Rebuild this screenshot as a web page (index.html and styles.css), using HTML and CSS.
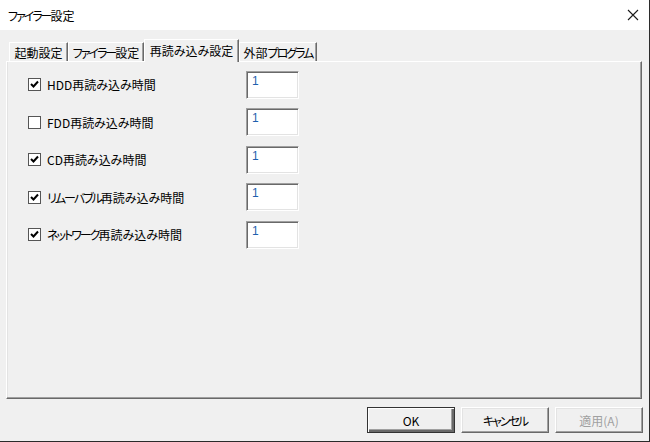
FILE: index.html
```html
<!DOCTYPE html>
<html lang="ja">
<head>
    <meta charset="UTF-8">
    <title>ファイラー設定</title>
    <link rel="stylesheet" href="styles.css">
</head>
<body>
    <div class="window">
        <div class="titlebar">
            <span class="title"><span class="kana">ファイラー</span>設定</span>
            <svg class="close" width="12" height="12" viewBox="0 0 12 12">
                <path d="M1 1 L11 11 M11 1 L1 11" stroke="#1a1a1a" stroke-width="1.1" fill="none"/>
            </svg>
        </div>

        <div class="body">
            <!-- tabs -->
            <div class="tabs">
                <div class="tab tab-1">起動設定</div>
                <div class="tab tab-2"><span class="kana">ファイラー</span>設定</div>
                <div class="tab tab-3 active">再読み込み設定</div>
                <div class="tab tab-4">外部<span class="kana">プログラム</span></div>
            </div>

            <div class="panel">
                <div class="row">
                    <label class="check">
                        <span class="box checked"><svg width="11" height="11" viewBox="0 0 11 11"><path d="M2 5 L4.5 7.5 L9 2.5" stroke="#000" stroke-width="2" fill="none"/></svg></span>
                        <span>HDD再読み込み時間</span>
                    </label>
                    <div class="field">1</div>
                </div>
                <div class="row">
                    <label class="check">
                        <span class="box"></span>
                        <span>FDD再読み込み時間</span>
                    </label>
                    <div class="field">1</div>
                </div>
                <div class="row">
                    <label class="check">
                        <span class="box checked"><svg width="11" height="11" viewBox="0 0 11 11"><path d="M2 5 L4.5 7.5 L9 2.5" stroke="#000" stroke-width="2" fill="none"/></svg></span>
                        <span>CD再読み込み時間</span>
                    </label>
                    <div class="field">1</div>
                </div>
                <div class="row">
                    <label class="check">
                        <span class="box checked"><svg width="11" height="11" viewBox="0 0 11 11"><path d="M2 5 L4.5 7.5 L9 2.5" stroke="#000" stroke-width="2" fill="none"/></svg></span>
                        <span><span class="kana">リムーバブル</span>再読み込み時間</span>
                    </label>
                    <div class="field">1</div>
                </div>
                <div class="row">
                    <label class="check">
                        <span class="box checked"><svg width="11" height="11" viewBox="0 0 11 11"><path d="M2 5 L4.5 7.5 L9 2.5" stroke="#000" stroke-width="2" fill="none"/></svg></span>
                        <span><span class="kana">ネットワーク</span>再読み込み時間</span>
                    </label>
                    <div class="field">1</div>
                </div>
            </div>

            <div class="buttons">
                <button class="btn default">OK</button>
                <button class="btn"><span class="kana">キャンセル</span></button>
                <button class="btn" disabled>適用(A)</button>
            </div>
        </div>
    </div>
</body>
</html>
```

FILE: styles.css
```css
body {
    margin: 0;
    font-family: "Noto Sans CJK JP", "Liberation Sans", sans-serif;
    font-size: 12px;
    font-feature-settings: "palt";
    color: #000;
    background: #f0f0f0;
}

/* katakana in Meiryo UI is much narrower than in Noto */
.kana {
    letter-spacing: -2px;
}

.window {
    width: 650px;
    height: 442px;
    box-sizing: border-box;
    display: flex;
    flex-direction: column;
    border-right: 1px solid #2b2b2b;
    border-bottom: 1px solid #2b2b2b;
}

.titlebar {
    height: 30px;
    background: white;
    display: flex;
    align-items: center;
    justify-content: space-between;
    padding: 0 10px 0 8px;
}

.title {
    font-size: 12px;
}

.body {
    flex: 1;
    background: #f0f0f0;
    display: flex;
    flex-direction: column;
    padding: 9px 6px 0 6px;
}

.tabs {
    display: flex;
    align-items: flex-end;
    height: 22px;
    padding-left: 3px;
}

.tab {
    height: 19px;
    flex-shrink: 0;
    white-space: nowrap;
    box-sizing: border-box;
    display: flex;
    align-items: center;
    justify-content: center;
    border-top: 1px solid white;
    border-left: 1px solid white;
    border-right: 1px solid #696969;
    box-shadow: inset -1px 0 #a0a0a0;
    background: #f0f0f0;
    padding-top: 1px;
}

.tab-1 { width: 59px; }
.tab-2 { width: 76px; }
.tab-3 { width: 95px; }
.tab-4 { width: 78px; }

.tab.active {
    height: 23px;
    margin-bottom: -1px;
    position: relative;
    z-index: 1;
    padding-bottom: 2px;
}

.panel {
    width: 636px;
    height: 338px;
    box-sizing: border-box;
    border-top: 1px solid white;
    border-left: 1px solid white;
    border-right: 1px solid #696969;
    border-bottom: 1px solid #696969;
    box-shadow: inset -1px -1px #a0a0a0, inset 1px 0 #e3e3e3;
    padding: 9px 0 0 21px;
    display: flex;
    flex-direction: column;
    gap: 10.5px;
}

.row {
    display: flex;
    align-items: center;
    height: 27px;
}

.check {
    width: 218px;
    display: flex;
    align-items: center;
    gap: 6px;
    white-space: nowrap;
}

.box {
    width: 13px;
    height: 13px;
    box-sizing: border-box;
    border: 1px solid #555;
    background: white;
    display: flex;
    align-items: center;
    justify-content: center;
}

.field {
    width: 53px;
    height: 28px;
    box-sizing: border-box;
    background: white;
    border-top: 1px solid #a0a0a0;
    border-left: 1px solid #a0a0a0;
    border-right: 1px solid white;
    border-bottom: 1px solid white;
    box-shadow: inset 1px 1px #696969, inset -1px -1px #e3e3e3;
    padding: 2px 0 0 5px;
    color: #1f5fae;
    font-family: "Liberation Sans", sans-serif;
    font-size: 12px;
    line-height: 14px;
}

.buttons {
    display: flex;
    justify-content: flex-end;
    gap: 6px;
    padding: 8px 0 0 0;
}

.btn {
    width: 88px;
    height: 26px;
    box-sizing: border-box;
    font-family: inherit;
    font-size: 12px;
    font-feature-settings: "palt";
    background: #f0f0f0;
    color: #000;
    border: 1px solid;
    border-color: white #696969 #696969 white;
    box-shadow: inset -1px -1px #a0a0a0, inset 1px 1px #e3e3e3;
    padding: 0;
}

.btn.default {
    border: 1px solid #333;
    box-shadow: inset 1px 1px white, inset -2px -2px #696969, inset -3px -3px #a0a0a0;
}

.btn:disabled {
    color: #a0a0a0;
}
```
